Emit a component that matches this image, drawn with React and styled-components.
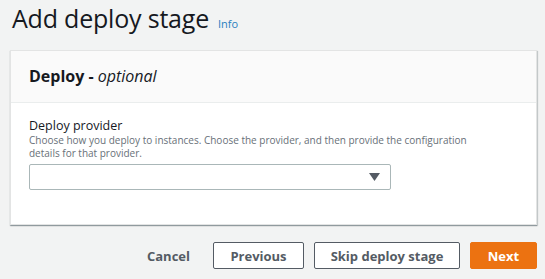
import React from 'react';
import styled, { createGlobalStyle } from 'styled-components';

const GlobalStyle = createGlobalStyle`
  body {
    margin: 0;
    background: #f2f3f3;
    font-family: "Open Sans", "Noto Sans", sans-serif;
    color: #16191f;
  }
`

const Page = styled.div`
  width: 545px;
  height: 279px;
  overflow: hidden;
  padding: 0 8px 0 10px;
  box-sizing: border-box;
`

const TitleRow = styled.div`
  display: flex;
  align-items: baseline;
  gap: 9px;
  height: 50px;
  padding-left: 2px;
`

const Title = styled.h1`
  margin: 0;
  font-size: 25px;
  font-weight: 400;
  line-height: 36px;
  letter-spacing: -0.2px;
`

const InfoLink = styled.a`
  font-size: 11px;
  color: #2a7fc0;
  text-decoration: none;
`

const Card = styled.div`
  background: #fff;
  border: 1px solid #e3e4e4;
  box-shadow: 0 1px 1px rgba(0, 28, 36, 0.3), 1px 1px 1px rgba(0, 28, 36, 0.15);
  height: 175px;
  box-sizing: border-box;
`

const CardHeader = styled.div`
  background: #fafafa;
  border-bottom: 1px solid #eaeded;
  height: 52px;
  box-sizing: border-box;
  padding: 13px 18px;
  font-size: 16px;
  font-weight: 700;
  line-height: 24px;
  em {
    font-weight: 400;
    font-style: italic;
  }
`

const CardBody = styled.div`
  padding: 15px 18px;
`

const Label = styled.div`
  font-size: 12.5px;
  line-height: 16px;
`

const Description = styled.div`
  font-size: 10px;
  line-height: 13px;
  color: #687078;
  width: 470px;
`

const Select = styled.div`
  margin-top: 4px;
  width: 362px;
  height: 26px;
  box-sizing: border-box;
  border: 1px solid #aab7b8;
  border-radius: 2px;
  display: flex;
  align-items: center;
  justify-content: flex-end;
  padding-right: 10px;
`

const Footer = styled.div`
  display: flex;
  justify-content: flex-end;
  align-items: center;
  gap: 10px;
  margin-top: 17px;
`

const Button = styled.button`
  font-family: inherit;
  font-size: 13px;
  font-weight: 700;
  height: 27px;
  width: ${p => (p.w ? `${p.w}px` : 'auto')};
  padding: 0 12px;
  white-space: nowrap;
  border-radius: 2px;
  border: 1px solid ${p => (p.primary ? '#ec7211' : p.link ? 'transparent' : '#545b64')};
  background: ${p => (p.primary ? '#ec7211' : p.link ? 'transparent' : '#fff')};
  color: ${p => (p.primary ? '#fff' : '#545b64')};
  cursor: pointer;
`

export default function App() {
  return (
    <Page>
      <GlobalStyle />
      <TitleRow>
        <Title>Add deploy stage</Title>
        <InfoLink href="#">Info</InfoLink>
      </TitleRow>
      <Card>
        <CardHeader>
          Deploy - <em>optional</em>
        </CardHeader>
        <CardBody>
          <Label>Deploy provider</Label>
          <Description>
            Choose how you deploy to instances. Choose the provider, and then provide the configuration details for that provider.
          </Description>
          <Select>
            <svg width="11" height="8" viewBox="0 0 11 8">
              <path d="M0 0 H11 L5.5 8 Z" fill="#545b64" />
            </svg>
          </Select>
        </CardBody>
      </Card>
      <Footer>
        <Button link>Cancel</Button>
        <Button w={91}>Previous</Button>
        <Button w={146}>Skip deploy stage</Button>
        <Button primary w={67}>Next</Button>
      </Footer>
    </Page>
  );
}
